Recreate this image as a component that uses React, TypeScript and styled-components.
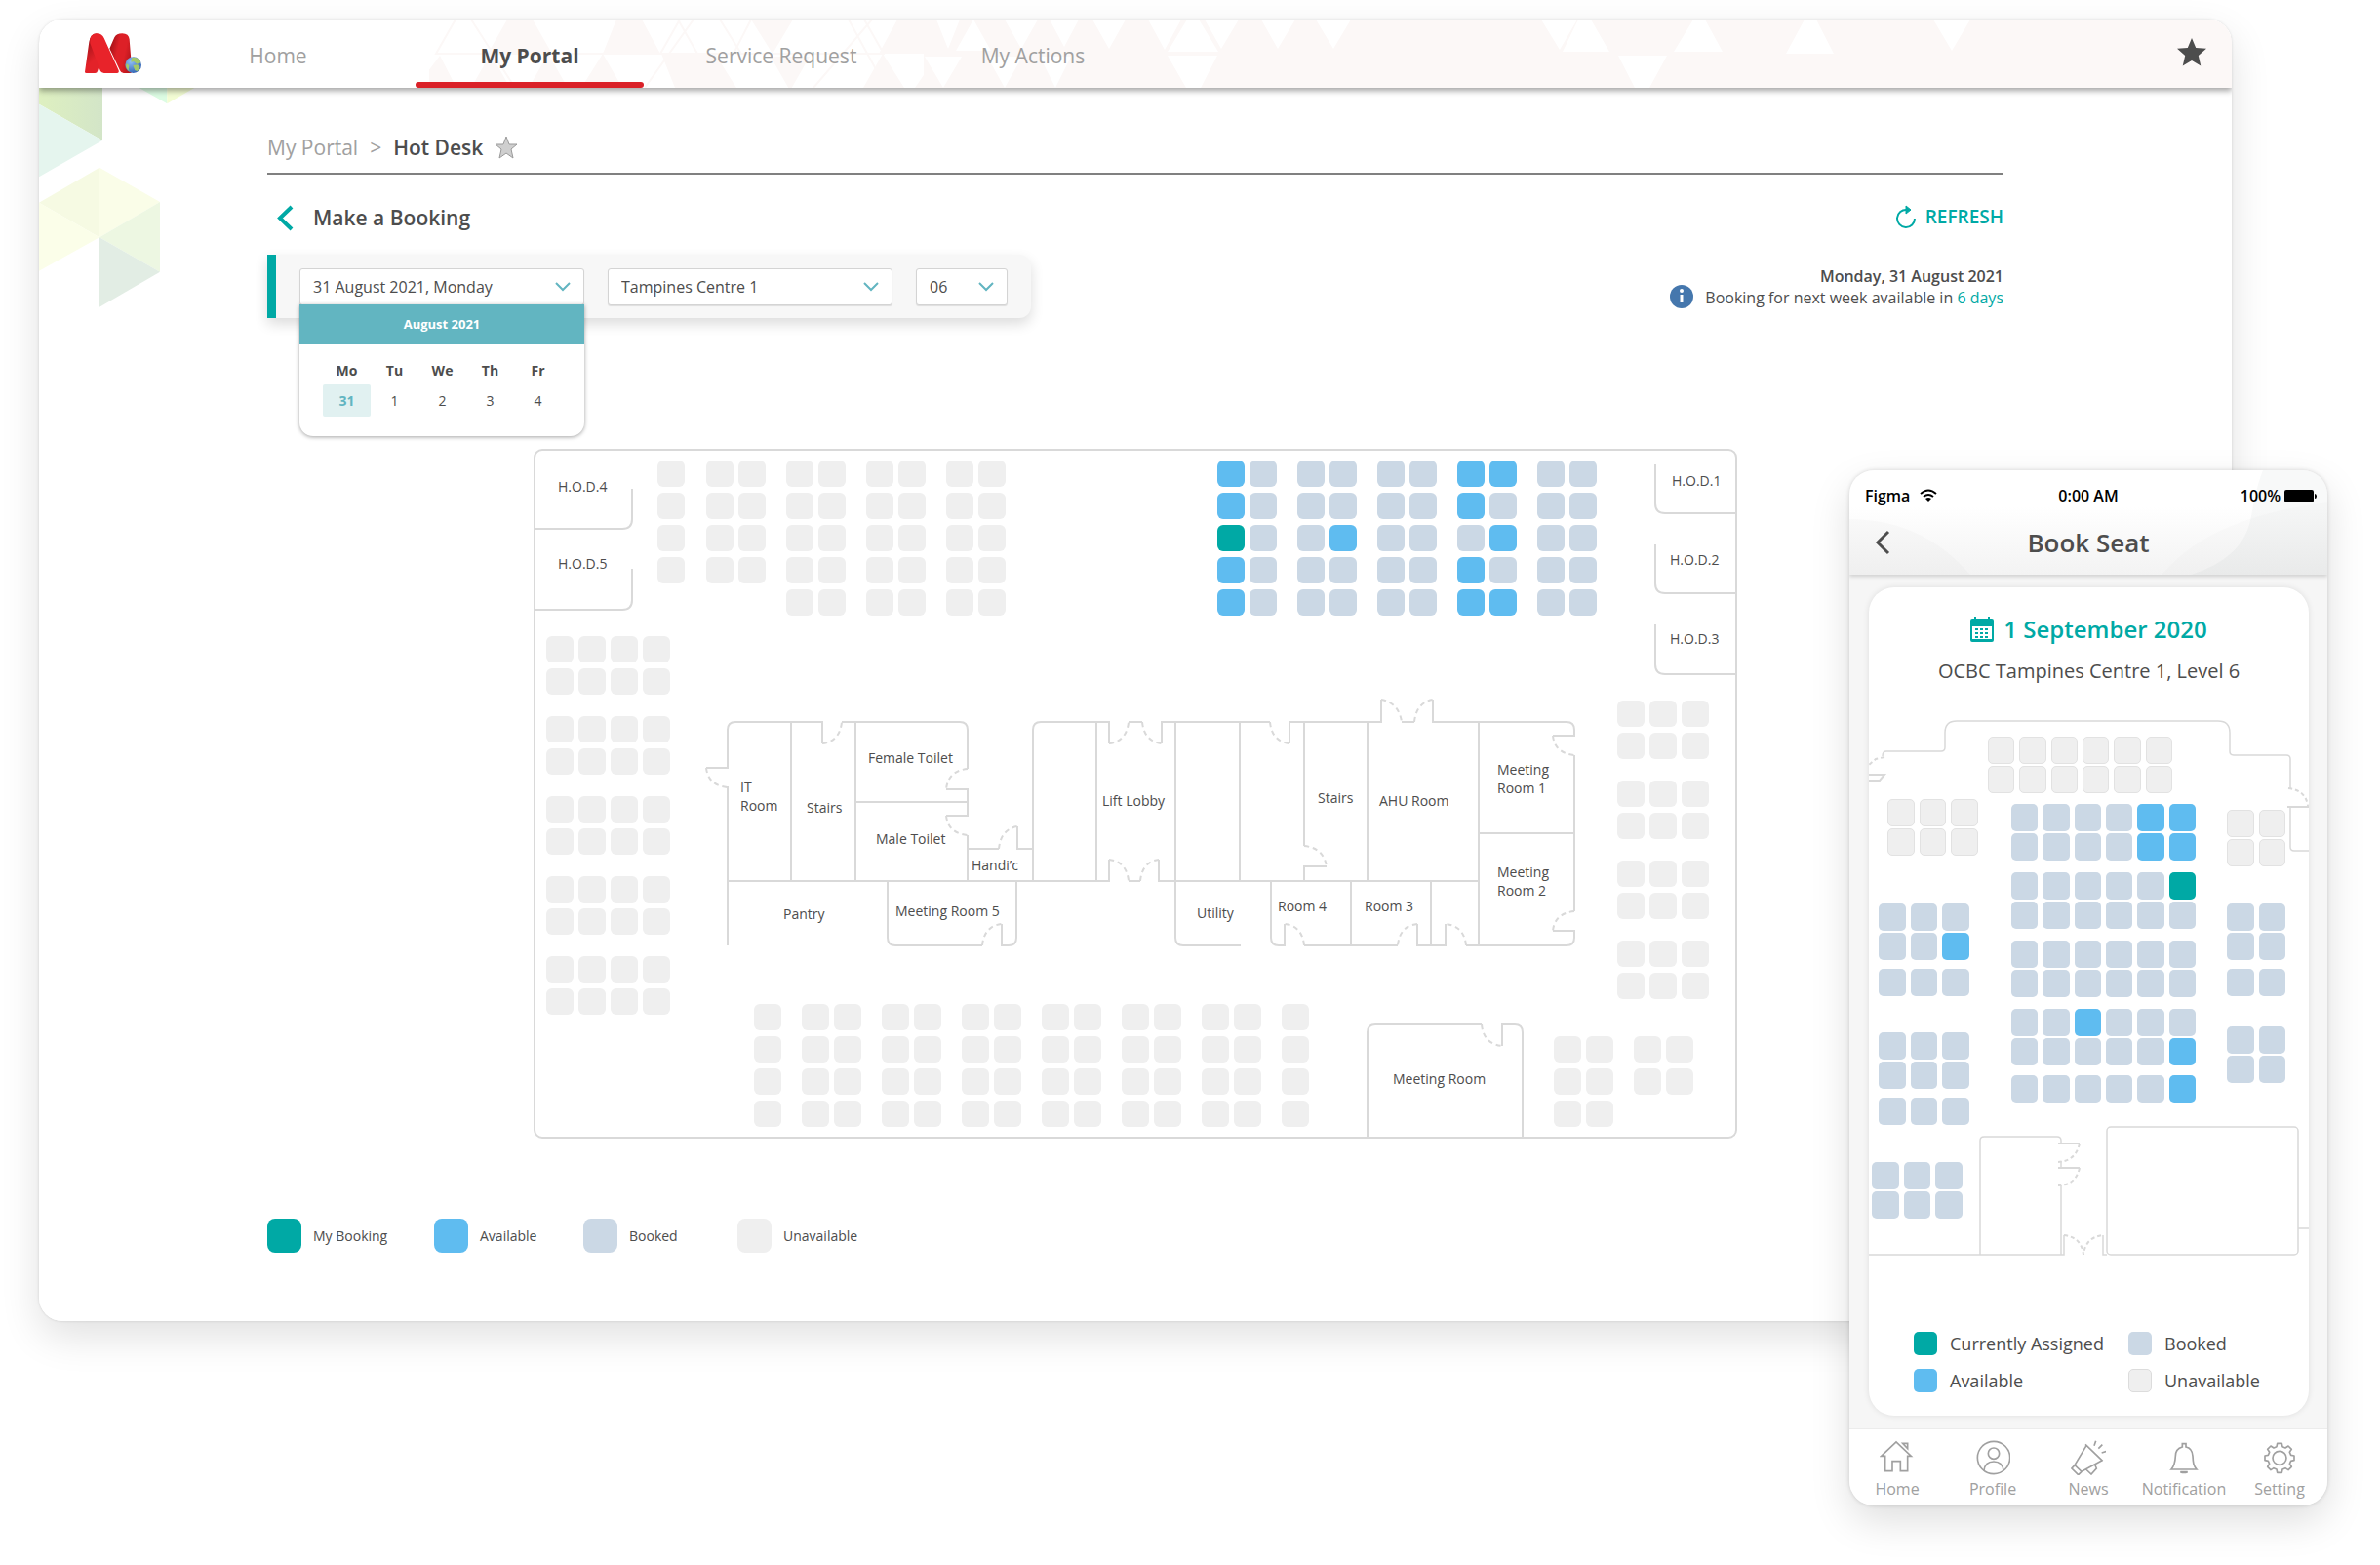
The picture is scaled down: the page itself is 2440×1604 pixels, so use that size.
import React from "react";
import styled, { createGlobalStyle, css } from "styled-components";
import { MdStar } from "react-icons/md";

const color = {
  teal: "#00a9a5",
  cyan: "#62b5c1",
  red: "#da2128",
  ink: "#4d4d4d",
  muted: "#a0a0a0",
  wall: "#d9d9d9",
  blue: "#5fbcf0",
  booked: "#cbd8e5",
  off: "#efefef",
};

type Status = "mine" | "available" | "booked" | "unavailable";
const fill: Record<Status, string> = {
  mine: color.teal,
  available: color.blue,
  booked: color.booked,
  unavailable: color.off,
};
const code: Record<string, Status> = { m: "mine", a: "available", b: "booked", u: "unavailable" };

const GlobalStyle = createGlobalStyle`
  *, *::before, *::after { box-sizing: border-box; }
  body { margin: 0; background: #fff; color: ${color.ink}; font-family: "Open Sans", "Noto Sans", sans-serif; font-size: 16px; }
  button, select { font: inherit; color: inherit; }
  button { padding: 0; border: 0; background: none; cursor: pointer; }
  a { color: inherit; text-decoration: none; }
  svg { display: block; flex: none; }
`;

/* ---------- shell ---------- */

const Page = styled.div`
  position: relative;
  min-width: 1600px;
  padding: 20px 152px 250px 40px;
`;

const Window = styled.div`
  position: relative;
  overflow: hidden;
  border-radius: 24px;
  background: #fff;
`;

const WindowShadow = styled.div`
  border-radius: 24px;
  box-shadow: 0 0 3px rgba(0, 0, 0, 0.14), 0 16px 40px rgba(0, 0, 0, 0.12);
`;

const Header = styled.header`
  position: relative;
  z-index: 1;
  display: flex;
  align-items: stretch;
  height: 70px;
  padding: 0 23px 0 46px;
  background: #fff;
  box-shadow: 0 3px 6px rgba(0, 0, 0, 0.36);
`;

const HeaderPattern = styled.svg`
  position: absolute;
  top: 0;
  right: 0;
`;

const LogoLink = styled.a`
  position: relative;
  display: flex;
  align-items: center;
  width: 82px;
`;

const Nav = styled.nav`
  position: relative;
  display: flex;
  flex: 1;
  gap: 24px;
`;

const NavLink = styled.a<{ $active?: boolean }>`
  display: flex;
  align-items: center;
  justify-content: center;
  width: 234px;
  padding-top: 3px;
  font-size: 21px;
  color: ${(p) => (p.$active ? color.ink : color.muted)};
  font-weight: ${(p) => (p.$active ? 700 : 400)};
  ${(p) =>
    p.$active &&
    css`
      &::after {
        content: "";
        position: absolute;
        bottom: 0;
        width: 234px;
        height: 6px;
        border-radius: 3px;
        background: ${color.red};
      }
    `}
`;

const StarButton = styled.button`
  position: relative;
  display: flex;
  align-items: center;
  padding-bottom: 2px;
  color: ${color.ink};
`;

const Decor = styled.svg`
  position: absolute;
  top: 70px;
  left: 0;
`;

const Main = styled.main`
  position: relative;
  padding: 36px 234px 70px;
`;

const Breadcrumb = styled.nav`
  display: flex;
  align-items: center;
  gap: 12px;
  height: 53px;
  padding-bottom: 2px;
  border-bottom: 2px solid #808080;
  font-size: 21px;
  color: ${color.muted};

  strong {
    font-weight: 600;
    color: ${color.ink};
  }
`;

const TitleRow = styled.div`
  display: flex;
  align-items: center;
  justify-content: space-between;
  height: 32px;
  margin-top: 28px;
`;

const Back = styled.button`
  display: flex;
  align-items: center;
  gap: 20px;
  padding-left: 9px;
  font-size: 21px;
  font-weight: 600;
`;

const Refresh = styled.button`
  display: flex;
  align-items: center;
  gap: 9px;
  padding-bottom: 2px;
  font-size: 19px;
  font-weight: 600;
  color: ${color.teal};
`;

const FilterRow = styled.div`
  display: flex;
  align-items: center;
  justify-content: space-between;
  margin-top: 22px;
`;

const FilterBar = styled.form`
  position: relative;
  z-index: 2;
  display: flex;
  align-items: center;
  gap: 24px;
  height: 65px;
  padding: 0 24px;
  border-left: 9px solid ${color.teal};
  border-radius: 0 12px 12px 0;
  background: #f7f7f7;
  box-shadow: 0 6px 14px rgba(0, 0, 0, 0.14);
`;

const Field = styled.div<{ $width: number }>`
  position: relative;
  display: grid;
  align-items: center;
  width: ${(p) => p.$width}px;

  > svg {
    grid-area: 1 / 1;
    justify-self: end;
    margin-right: 14px;
    pointer-events: none;
  }
`;

const control = css`
  grid-area: 1 / 1;
  width: 100%;
  height: 38px;
  padding: 0 13px;
  border: 1px solid #d4d4d4;
  border-radius: 3px;
  background: #fff;
  box-shadow: 0 1px 1px rgba(0, 0, 0, 0.1);
  font-size: 16px;
  text-align: left;
`;

const DateButton = styled.button`
  ${control}
`;

const Select = styled.select`
  ${control}
  appearance: none;
`;

const Calendar = styled.div`
  position: absolute;
  top: 37px;
  left: 0;
  width: 100%;
  overflow: hidden;
  border-radius: 0 0 14px 14px;
  background: #fff;
  box-shadow: 0 1px 4px rgba(0, 0, 0, 0.36);
`;

const CalendarTitle = styled.div`
  background: ${color.cyan};
  color: #fff;
  font-size: 13px;
  font-weight: 700;
  line-height: 41px;
  text-align: center;
`;

const CalendarTable = styled.table`
  width: 245px;
  margin: 12px 24px 20px;
  border-collapse: collapse;
  table-layout: fixed;
  font-size: 14px;
  text-align: center;

  th,
  td {
    padding: 0;
  }
  th {
    height: 29px;
    font-weight: 700;
  }
`;

const Day = styled.button<{ $selected?: boolean }>`
  width: 49px;
  height: 33px;
  border-radius: 2px;
  background: ${(p) => (p.$selected ? "#e1f1f1" : "none")};
  color: ${(p) => (p.$selected ? color.cyan : color.ink)};
  font-weight: ${(p) => (p.$selected ? 700 : 400)};
`;

const Notice = styled.div`
  display: flex;
  align-items: flex-end;
  gap: 12px;
  font-size: 16px;
  line-height: 22px;
  text-align: right;

  p {
    margin: 0;
  }
  strong {
    font-weight: 600;
  }
  a {
    color: ${color.teal};
  }
`;

/* ---------- floor plans ---------- */

const Plan = styled.section`
  position: relative;
  width: 1234px;
  margin: 134px auto 0;
`;

const Banks = styled.div`
  position: absolute;
  inset: 0;
`;

const Bank = styled.div<{ $x: number; $y: number; $cols: number; $w: number; $row: number; $gap: string }>`
  position: absolute;
  left: ${(p) => p.$x}px;
  top: ${(p) => p.$y}px;
  display: grid;
  width: ${(p) => p.$w}px;
  grid-template-columns: repeat(${(p) => p.$cols}, 1fr);
  grid-auto-rows: ${(p) => p.$row}px;
  gap: ${(p) => p.$gap};
`;

const Seat = styled.button<{ $status: Status; $outlined?: boolean }>`
  border-radius: ${(p) => (p.$outlined ? 5 : 6)}px;
  background: ${(p) => fill[p.$status]};
  ${(p) => p.$outlined && p.$status === "unavailable" && "border: 1px solid #e2e2e2;"}
`;

const RoomLabel = styled.span<{ $x: number; $y: number }>`
  position: absolute;
  left: ${(p) => p.$x}px;
  top: ${(p) => p.$y}px;
  font-size: 14px;
  line-height: 19px;
  white-space: pre;
`;

const Legend = styled.ul`
  display: grid;
  grid-template-columns: 171px 153px 158px auto;
  justify-content: start;
  margin: 82px 0 0;
  padding: 0;
  list-style: none;
  font-size: 14px;
`;

const LegendItem = styled.li<{ $gap: number }>`
  display: flex;
  align-items: center;
  gap: ${(p) => p.$gap}px;
  white-space: nowrap;
`;

const Swatch = styled.span<{ $status: Status; $size: number; $outlined?: boolean }>`
  width: ${(p) => p.$size}px;
  height: ${(p) => p.$size}px;
  border-radius: ${(p) => (p.$size > 30 ? 8 : 5)}px;
  background: ${(p) => fill[p.$status]};
  ${(p) => p.$outlined && "border: 1px solid #dcdcdc;"}
`;

/* ---------- phone ---------- */

const Phone = styled.aside`
  position: absolute;
  top: 482px;
  right: 54px;
  z-index: 3;
  display: flex;
  flex-direction: column;
  width: 490px;
  overflow: hidden;
  border-radius: 25px;
  background: #f6f6f6;
  box-shadow: 0 0 4px rgba(0, 0, 0, 0.16), 0 16px 40px rgba(0, 0, 0, 0.13);
`;

const PhoneHeader = styled.header`
  position: relative;
  z-index: 1;
  height: 107px;
  background: linear-gradient(#fff 35%, #f3f3f3);
  box-shadow: 0 2px 4px rgba(0, 0, 0, 0.16);
`;

const Swoosh = styled.svg`
  position: absolute;
  inset: 0;
`;

const StatusBar = styled.div`
  position: relative;
  display: grid;
  grid-template-columns: 1fr auto 1fr;
  align-items: center;
  height: 52px;
  padding: 0 11px;
  font-size: 16px;
  font-weight: 600;
  color: #000;
`;

const StatusGroup = styled.span<{ $end?: boolean }>`
  display: flex;
  align-items: center;
  justify-content: ${(p) => (p.$end ? "flex-end" : "flex-start")};
  gap: ${(p) => (p.$end ? 4 : 10)}px;
  padding-left: 5px;
`;

const PhoneTitle = styled.div`
  position: relative;
  display: grid;
  grid-template-columns: 50px 1fr 50px;
  align-items: center;
  height: 44px;

  button {
    justify-self: end;
    padding-right: 8px;
  }
  h2 {
    margin: 0;
    font-size: 26px;
    font-weight: 600;
    text-align: center;
  }
`;

const PhoneCard = styled.section`
  position: relative;
  overflow: hidden;
  margin: 13px 19px 13px 20px;
  border-radius: 26px;
  background: #fff;
  box-shadow: 0 0 6px rgba(0, 0, 0, 0.1);
`;

const PhoneDate = styled.h3`
  display: flex;
  align-items: center;
  justify-content: center;
  gap: 10px;
  margin: 26px 0 0;
  font-size: 24px;
  font-weight: 600;
  line-height: 34px;
  color: ${color.teal};
`;

const PhonePlace = styled.p`
  margin: 12px 0 0;
  font-size: 20px;
  font-weight: 500;
  line-height: 28px;
  text-align: center;
`;

const PhonePlan = styled.div`
  position: relative;
  margin-top: 34px;
`;

const PhoneLegend = styled.ul`
  display: grid;
  grid-template-columns: 220px auto;
  justify-content: start;
  row-gap: 10px;
  margin: 0;
  padding: 75px 0 22px 46px;
  list-style: none;
  font-size: 18px;
  line-height: 28px;
`;

const TabBar = styled.nav`
  display: flex;
  border-top: 1px solid #ececec;
  background: #fff;
`;

const Tab = styled.a`
  display: flex;
  flex: 1;
  flex-direction: column;
  align-items: center;
  gap: 4px;
  padding: 11px 0 7px;
  font-size: 16px;
  line-height: 20px;
  color: ${color.muted};
`;

/* ---------- drawings ---------- */

const Chevron = () => (
  <svg width="16" height="10" viewBox="0 0 16 10" fill="none" stroke={color.cyan} strokeWidth="2" aria-hidden>
    <path d="M1 1l7 7 7-7" />
  </svg>
);

const Logo = () => (
  <svg width="60" height="44" viewBox="150 50 180 132" role="img" aria-label="M home">
    <defs>
      <linearGradient id="leg1" x1="0" y1="0" x2="0.4" y2="1">
        <stop offset="0.25" stopColor="#a8141a" />
        <stop offset="0.75" stopColor="#e32229" />
      </linearGradient>
      <linearGradient id="leg2" x1="0" y1="0" x2="1" y2="0.4">
        <stop offset="0.15" stopColor="#a81419" />
        <stop offset="0.45" stopColor="#dd2027" />
        <stop offset="0.75" stopColor="#dd2027" />
        <stop offset="1" stopColor="#bd171d" />
      </linearGradient>
      <radialGradient id="globe" cx="0.35" cy="0.3" r="0.8">
        <stop offset="0" stopColor="#8fc0f5" />
        <stop offset="1" stopColor="#2a5cae" />
      </radialGradient>
    </defs>
    <path d="M153 172l13-92q4-26 24-26l20 60-18 56q-1 6-8 6h-26q-5 0-5-4z" fill="url(#leg1)" />
    <path d="M229 100l15-34q6-12 24-12 20 0 22 18l8 98q0 6-6 6h-20q-8 0-11-8z" fill="url(#leg2)" />
    <path d="M169 84q-3-30 21-30 16 0 22 14l45 100q2 8-5 8h-40q-9 0-12-8z" fill="#e8232a" />
    <circle cx="302" cy="151" r="25" fill="url(#globe)" />
    <path d="M298 128q14-4 24 8l3 8-12 4-10-8-8 2zM301 152l14-2 8 8-8 12-8-2zM281 146l8 6-2 12 4 8q-10-6-12-16z" fill="#a3c96a" />
  </svg>
);

const Pattern = () => (
  <HeaderPattern width="1848" height="70" viewBox="440 20 1848 70" aria-hidden>
    <g fill="#fcf8f7">
      <path d="M520 20h26l20 35h-66zM632 20h26l19 35h-59zM770 20h43l-21 35zM920 20h27l19 35h-65z" />
      <path d="M451 57l17 33h-42zM503 55l20 35h-40zM562 55l20 35h-40zM618 55l20 35h-42zM678 55h55l22 35h-63zM790 58h40l-20 35zM905 55l22 35h-42zM960 58v32h-22zM947 20h14v70h-14z" />
      <path d="M960 20h1328v70H960z" />
    </g>
    <g fill="none" stroke="#fcf8f7" strokeWidth="2">
      <path d="M467 20l-20 35h460M483 20l45 70M619 55l22-35M695 20l20 35M677 55l20-35M661 90l50-70M738 20l22 35M752 55l18-35M834 90l60-70M870 20l34 62M886 20l20 35" />
    </g>
    <g fill="#fff">
      <path d="M960 20h24l-12 30zM998 20l18 32h-36zM1030 20h34l-17 30zM948 58h38l-19 32zM1012 58h36l-18 32zM1066 58h32l-16 32z" />
      <path d="M1076 20h30l-15 28zM1120 20h34l-17 30zM1177 20h34l-17 31zM1217 20h12l20 33h-52zM1235 20h35l-18 30zM1293 20h35l-18 30zM1349 20h36l-18 30z" />
      <path d="M1580 20h37l-18 31zM1618 20h13l19 33h-48zM1736 20h12l18 33h-50zM1850 20h12l18 35h-49zM1982 20h38l-19 32zM1197 57h51l-17 33h-15zM1659 57h50l-18 33h-15z" />
    </g>
  </HeaderPattern>
);

const Triangles = () => (
  <Decor width="160" height="226" viewBox="12 222 480 678" aria-hidden>
    <defs>
      <linearGradient id="leaf">
        <stop offset="0" stopColor="#def0c0" />
        <stop offset="1" stopColor="#d3e5c8" />
      </linearGradient>
    </defs>
    <path d="M12 222h195v162L12 272z" fill="url(#leaf)" />
    <path d="M12 272l195 112L12 496z" fill="#e5f5ee" />
    <path d="M320 222h86v49z" fill="#dcfce3" />
    <path d="M406 222h84l-84 49z" fill="#f3fdd4" />
    <path d="M198 467L12 575l186 107z" fill="#f6fae3" />
    <path d="M198 467l186 106-186 109z" fill="#fafde8" />
    <path d="M12 575l186 107L12 785z" fill="#fbfee9" />
    <path d="M384 573v215L198 682z" fill="#edf7e2" />
    <path d="M198 682l186 106-186 108z" fill="#e2ede4" />
  </Decor>
);

const DesktopWalls = () => (
  <svg width="1234" height="707" viewBox="547 460 1234 707" fill="none" stroke={color.wall} strokeWidth="2" aria-hidden>
    <rect x="548" y="461" width="1232" height="705" rx="8" />
    <path d="M548 542h90q10 0 10-10v-31M548 625h90q10 0 10-10v-32" />
    <path d="M1780 526h-73q-10 0-10-10v-40M1780 608h-73q-10 0-10-10v-40M1780 691h-73q-10 0-10-10v-41" />
    <path d="M724 787h22v-39q0-8 8-8h89v22M863 740h121q8 0 8 8v40M970 809h22v27h-22M992 856v47M746 806v163M811 740v163M877 740v163M877 822h115" />
    <path d="M992 870h32M1043 847v23h15M1059 903V748q0-8 8-8h70v22M1124 740v163M1157 740h14M1191 762v-22h111" />
    <path d="M746 903h391v-22M1157 903h12M1188 881v22h328M910 903v58q0 8 8 8h89M1027 947v22h7q8 0 8-8v-58" />
    <path d="M1205 740v221q0 8 8 8h59M1271 740v163M1337 740v127M1360 888h-23v15M1402 740v163M1516 740v229M1516 854h98" />
    <path d="M1322 762v-22h94v-23M1437 740h13M1469 717v23h137q8 0 8 8v6h-22M1614 774v160M1592 954h22v7q0 8-8 8h-103M1482 947v22h-29v-22M1433 969h-96M1317 947v22h-6q-8 0-8-8v-58M1385 903v66M1467 903v66" />
    <path d="M1402 1166v-108q0-8 8-8h109M1540 1072v-22h13q8 0 8 8v108" />
    <g strokeDasharray="5 4">
      <path d="M724 787q2 18 22 20M843 762q18-2 20-22M992 788q-20 2-22 21M970 836q2 18 22 20M1024 870q2-20 19-23" />
      <path d="M1137 762q18-2 20-22M1171 740q2 20 20 22M1137 881q18 2 20 22M1169 903q2-20 19-22M1007 969q2-20 20-22" />
      <path d="M1302 740q2 20 20 22M1416 717q18 3 21 23M1450 740q2-20 19-23M1592 754q2 18 22 20M1614 934q-20 2-22 20" />
      <path d="M1337 867q20 2 23 21M1503 969q-2-20-21-22M1453 947q-18 2-20 22M1337 969q-2-20-20-22M1519 1050q2 20 21 22" />
    </g>
  </svg>
);

const PhoneWalls = () => (
  <svg width="451" height="552" viewBox="1916 736 451 552" fill="none" stroke={color.wall} strokeWidth="1.5" aria-hidden>
    <path d="M1930 775q0-5 4-5h56q4 0 4-4v-15q0-12 12-12h268q12 0 12 12v19q0 4 4 4h54q4 0 4 4v30M2348 828v40q0 4 4 4h15" />
    <path d="M1916 1286h200v-20M2030 1286v-117q0-4 4-4h75q4 0 4 4v3M2113 1190v6M2113 1215v71M2156 1266v20h4" />
    <rect x="2160" y="1155" width="196" height="131" rx="4" />
    <path d="M2356 1259h11" />
    <path d="M1916 794h16l-5 6h-11M2345 827h22M2110 1172h22M2110 1197h22" strokeWidth="2" />
    <path d="M1932 776l-9 2-7 6M2346 808q18 2 20 18M2132 1172q-4 18-22 19M2132 1197q-4 18-22 18M2116 1266q18 2 20 20q2-18 20-20" strokeWidth="2" strokeDasharray="4 3" />
  </svg>
);

const gearPath = (() => {
  const points: string[] = [];
  for (let i = 0; i < 8; i++) {
    const base = (i * Math.PI) / 4;
    [[-0.25, 36], [-0.15, 46], [0.15, 46], [0.25, 36]].forEach(([offset, r]) => {
      const a = base + offset;
      points.push(`${Math.round(1311 + r * Math.cos(a))} ${Math.round(196 + r * Math.sin(a))}`);
    });
  }
  return `M${points.join("L")}Z`;
})();

const tabs = [
  { name: "Home", cx: 135, art: <path d="M86 190l46-43 46 43h-11v46h-22v-30h-25v30H98v-46zM152 151h15v16z" /> },
  {
    name: "Profile",
    cx: 429,
    art: (
      <>
        <circle cx="432" cy="195" r="50" />
        <circle cx="432" cy="182" r="17" />
        <path d="M402 235c2-20 15-28 30-28s28 8 30 28" />
      </>
    ),
  },
  {
    name: "News",
    cx: 723,
    art: (
      <path d="M714 154l53 51M717 158l-36 60 21 20 62-34M681 218l-9 10 20 20 10-10M716 231l16 15 16-18-5-12M741 158l5-15M754 167l12-12M764 180l16-5" />
    ),
  },
  {
    name: "Notification",
    cx: 1017,
    art: (
      <>
        <path d="M978 231h78c-10-11-11-21-12-41-1-18-10-26-21-28v-10h-11v10c-12 3-21 12-21 28-1 20-3 30-13 41z" />
        <path d="M1006 239q11 5 22 0z" />
      </>
    ),
  },
  {
    name: "Setting",
    cx: 1311,
    art: (
      <>
        <path d={gearPath} strokeLinejoin="round" />
        <circle cx="1311" cy="196" r="21" />
      </>
    ),
  },
];

/* ---------- data ---------- */

type BankData = [x: number, y: number, rows: string];
const repeat = (row: string, n: number) => Array(n).fill(row).join(" ");

const desktopBanks: BankData[] = [
  [127, 12, repeat("u", 4)],
  [177, 12, repeat("uu", 4)],
  [259, 12, repeat("uu", 5)],
  [341, 12, repeat("uu", 5)],
  [423, 12, repeat("uu", 5)],
  [701, 12, "ab ab mb ab ab"],
  [783, 12, "bb bb ba bb bb"],
  [865, 12, repeat("bb", 5)],
  [947, 12, "aa ab ba ab aa"],
  [1029, 12, repeat("bb", 5)],
  ...[192, 274, 356, 438, 520].map((y): BankData => [13, y, "uuuu uuuu"]),
  [226, 569, repeat("u", 4)],
  ...[275, 357, 439, 521, 603, 685].map((x): BankData => [x, 569, repeat("uu", 4)]),
  [767, 569, repeat("u", 4)],
  ...[258, 340, 422, 504].map((y): BankData => [1111, y, "uuu uuu"]),
  [1046, 602, repeat("uu", 3)],
  [1128, 602, repeat("uu", 2)],
];

const phoneBanks: BankData[] = [
  [122, 19, "uuuuuu uuuuuu"],
  [19, 83, "uuu uuu"],
  [367, 94, "uu uu"],
  [146, 88, "bbbbaa bbbbaa"],
  [146, 158, "bbbbbm bbbbbb"],
  [146, 228, "bbbbbb bbbbbb"],
  [146, 298, "bbabbb bbbbba"],
  [146, 366, "bbbbba"],
  [10, 190, "bbb bba"],
  [10, 257, "bbb"],
  [10, 322, "bbb bbb"],
  [10, 389, "bbb"],
  [3, 455, "bbb bbb"],
  [367, 190, "bb bb"],
  [367, 257, "bb"],
  [367, 316, "bb bb"],
];
const phoneBankWidth: Record<number, number> = { 2: 60, 3: 93, 6: 189 };

const rooms: [x: number, y: number, text: string][] = [
  [25, 29, "H.O.D.4"],
  [25, 108, "H.O.D.5"],
  [1167, 23, "H.O.D.1"],
  [1165, 104, "H.O.D.2"],
  [1165, 185, "H.O.D.3"],
  [212, 337, "IT\nRoom"],
  [280, 358, "Stairs"],
  [343, 307, "Female Toilet"],
  [351, 390, "Male Toilet"],
  [449, 417, "Handi’c"],
  [256, 467, "Pantry"],
  [371, 464, "Meeting Room 5"],
  [583, 351, "Lift Lobby"],
  [680, 466, "Utility"],
  [763, 459, "Room 4"],
  [852, 459, "Room 3"],
  [804, 348, "Stairs"],
  [867, 351, "AHU Room"],
  [988, 319, "Meeting\nRoom 1"],
  [988, 424, "Meeting\nRoom 2"],
  [881, 636, "Meeting Room"],
];

const Seats = ({ banks, phone }: { banks: BankData[]; phone?: boolean }) => (
  <Banks>
    {banks.map(([x, y, rows], i) => {
      const cols = rows.split(" ")[0].length;
      return (
        <Bank
          key={i}
          $x={x}
          $y={y}
          $cols={cols}
          $w={phone ? phoneBankWidth[cols] : cols * 33 - 5}
          $row={phone ? 28 : 27}
          $gap={phone ? "2px 5px" : "6px 5px"}
        >
          {rows
            .replace(/ /g, "")
            .split("")
            .map((c, j) => (
              <Seat key={j} type="button" $status={code[c]} $outlined={phone} aria-label={`Seat ${i + 1}-${j + 1}, ${code[c]}`} />
            ))}
        </Bank>
      );
    })}
  </Banks>
);

const Desktop = () => (
  <WindowShadow>
    <Window>
      <Header>
        <Pattern />
        <LogoLink href="#">
          <Logo />
        </LogoLink>
        <Nav aria-label="Main">
          <NavLink href="#">Home</NavLink>
          <NavLink href="#" $active aria-current="page">
            My Portal
          </NavLink>
          <NavLink href="#">Service Request</NavLink>
          <NavLink href="#">My Actions</NavLink>
        </Nav>
        <StarButton type="button" aria-label="Favourites">
          <MdStar size={36} />
        </StarButton>
      </Header>
      <Triangles />
      <Main>
        <Breadcrumb aria-label="Breadcrumb">
          <a href="#">My Portal</a>
          <span>&gt;</span>
          <strong>Hot Desk</strong>
          <svg width="24" height="24" viewBox="0 0 24 24" fill="#cfcfcf" stroke="#9a9a9a" aria-hidden>
            <path d="M12 1l3 8h8l-6 5 2 9-7-5-7 5 2-9-6-5h8z" />
          </svg>
        </Breadcrumb>
        <TitleRow>
          <Back type="button">
            <svg width="18" height="27" viewBox="0 0 18 27" fill="none" stroke={color.teal} strokeWidth="4" aria-hidden>
              <path d="M16 2L4 13.500l12 11.500" />
            </svg>
            Make a Booking
          </Back>
          <Refresh type="button">
            <svg width="22" height="24" viewBox="0 0 22 24" fill="none" stroke={color.teal} strokeWidth="2" aria-hidden>
              <path d="M12 5a9 9 0 1 0 8 9" />
              <path d="M11 1l5 4-5 4z" fill={color.teal} strokeWidth="1" />
            </svg>
            REFRESH
          </Refresh>
        </TitleRow>
        <FilterRow>
          <FilterBar>
            <Field $width={292}>
              <DateButton type="button" aria-haspopup="dialog" aria-expanded="true">
                31 August 2021, Monday
              </DateButton>
              <Chevron />
              <Calendar>
                <CalendarTitle>August 2021</CalendarTitle>
                <CalendarTable>
                  <thead>
                    <tr>
                      {["Mo", "Tu", "We", "Th", "Fr"].map((d) => (
                        <th key={d} scope="col">
                          {d}
                        </th>
                      ))}
                    </tr>
                  </thead>
                  <tbody>
                    <tr>
                      {[31, 1, 2, 3, 4].map((d) => (
                        <td key={d}>
                          <Day type="button" $selected={d === 31}>
                            {d}
                          </Day>
                        </td>
                      ))}
                    </tr>
                  </tbody>
                </CalendarTable>
              </Calendar>
            </Field>
            <Field $width={292}>
              <Select aria-label="Building" defaultValue="Tampines Centre 1">
                <option>Tampines Centre 1</option>
              </Select>
              <Chevron />
            </Field>
            <Field $width={94}>
              <Select aria-label="Level" defaultValue="06">
                <option>06</option>
              </Select>
              <Chevron />
            </Field>
          </FilterBar>
          <Notice>
            <svg width="24" height="24" viewBox="0 0 24 24" aria-hidden>
              <circle cx="12" cy="12" r="12" fill="#4577ad" />
              <path d="M12 10v8" stroke="#fff" strokeWidth="3" />
              <circle cx="12" cy="6" r="2" fill="#fff" />
            </svg>
            <div>
              <p>
                <strong>Monday, 31 August 2021</strong>
              </p>
              <p>
                Booking for next week available in <a href="#">6 days</a>
              </p>
            </div>
          </Notice>
        </FilterRow>
        <Plan aria-label="Floor plan">
          <DesktopWalls />
          <Seats banks={desktopBanks} />
          {rooms.map(([x, y, text]) => (
            <RoomLabel key={`${x}-${y}`} $x={x} $y={y}>
              {text}
            </RoomLabel>
          ))}
        </Plan>
        <Legend>
          {(
            [
              ["mine", "My Booking"],
              ["available", "Available"],
              ["booked", "Booked"],
              ["unavailable", "Unavailable"],
            ] as [Status, string][]
          ).map(([status, text]) => (
            <LegendItem key={status} $gap={12}>
              <Swatch $status={status} $size={35} />
              {text}
            </LegendItem>
          ))}
        </Legend>
      </Main>
    </Window>
  </WindowShadow>
);

const Mobile = () => (
  <Phone>
    <PhoneHeader>
      <Swoosh width="490" height="107" viewBox="0 0 490 107" aria-hidden>
        <path d="M0 50q75 0 124 57H0z" fill="#000" opacity="0.015" />
        <path d="M424 0h66v107H350q55-17 62-60 5-30 12-47z" fill="#465a50" opacity="0.035" />
        <path d="M320 107q50-60 170-74v74z" fill="#000" opacity="0.012" />
      </Swoosh>
      <StatusBar>
        <StatusGroup>
          Figma
          <svg width="18" height="14" viewBox="0 0 18 14" fill="none" stroke="#000" strokeWidth="2" aria-hidden>
            <path d="M1 5q8-7 16 0M4 8q5-4 10 0" />
            <path d="M6 10q3-2 6 0l-3 3z" fill="#000" stroke="none" />
          </svg>
        </StatusGroup>
        <span>0:00 AM</span>
        <StatusGroup $end>
          100%
          <svg width="33" height="13" viewBox="0 0 33 13" aria-hidden>
            <rect width="30" height="13" rx="2" />
            <path d="M31 4q2 0 2 2.500t-2 2.500z" />
          </svg>
        </StatusGroup>
      </StatusBar>
      <PhoneTitle>
        <button type="button" aria-label="Back">
          <svg width="16" height="26" viewBox="0 0 16 26" fill="none" stroke={color.ink} strokeWidth="3" aria-hidden>
            <path d="M14 2L3 13l11 11" />
          </svg>
        </button>
        <h2>Book Seat</h2>
      </PhoneTitle>
    </PhoneHeader>
    <PhoneCard>
      <PhoneDate>
        <svg width="24" height="26" viewBox="0 0 24 26" aria-hidden>
          <path d="M4 0h2v2h12V0h2v2h2q2 0 2 2v20q0 2-2 2H2q-2 0-2-2V4q0-2 2-2h2zM2 10v13h20V10z" fill={color.teal} fillRule="evenodd" />
          <path d="M5 13h3m2 0h3m2 0h3M5 17h3m2 0h3m2 0h3M5 21h3m2 0h3m2 0h3" stroke={color.teal} strokeWidth="2" />
        </svg>
        1 September 2020
      </PhoneDate>
      <PhonePlace>OCBC Tampines Centre 1, Level 6</PhonePlace>
      <PhonePlan>
        <PhoneWalls />
        <Seats banks={phoneBanks} phone />
      </PhonePlan>
      <PhoneLegend>
        {(
          [
            ["mine", "Currently Assigned"],
            ["booked", "Booked"],
            ["available", "Available"],
            ["unavailable", "Unavailable"],
          ] as [Status, string][]
        ).map(([status, text]) => (
          <LegendItem key={status} $gap={13}>
            <Swatch $status={status} $size={24} $outlined={status === "unavailable"} />
            {text}
          </LegendItem>
        ))}
      </PhoneLegend>
    </PhoneCard>
    <TabBar aria-label="App">
      {tabs.map(({ name, cx, art }) => (
        <Tab key={name} href="#">
          <svg width="36" height="36" viewBox={`${cx - 54} 141 108 108`} fill="none" stroke={color.muted} strokeWidth="5" aria-hidden>
            {art}
          </svg>
          {name}
        </Tab>
      ))}
    </TabBar>
  </Phone>
);

export default function App() {
  return (
    <Page>
      <GlobalStyle />
      <Desktop />
      <Mobile />
    </Page>
  );
}
